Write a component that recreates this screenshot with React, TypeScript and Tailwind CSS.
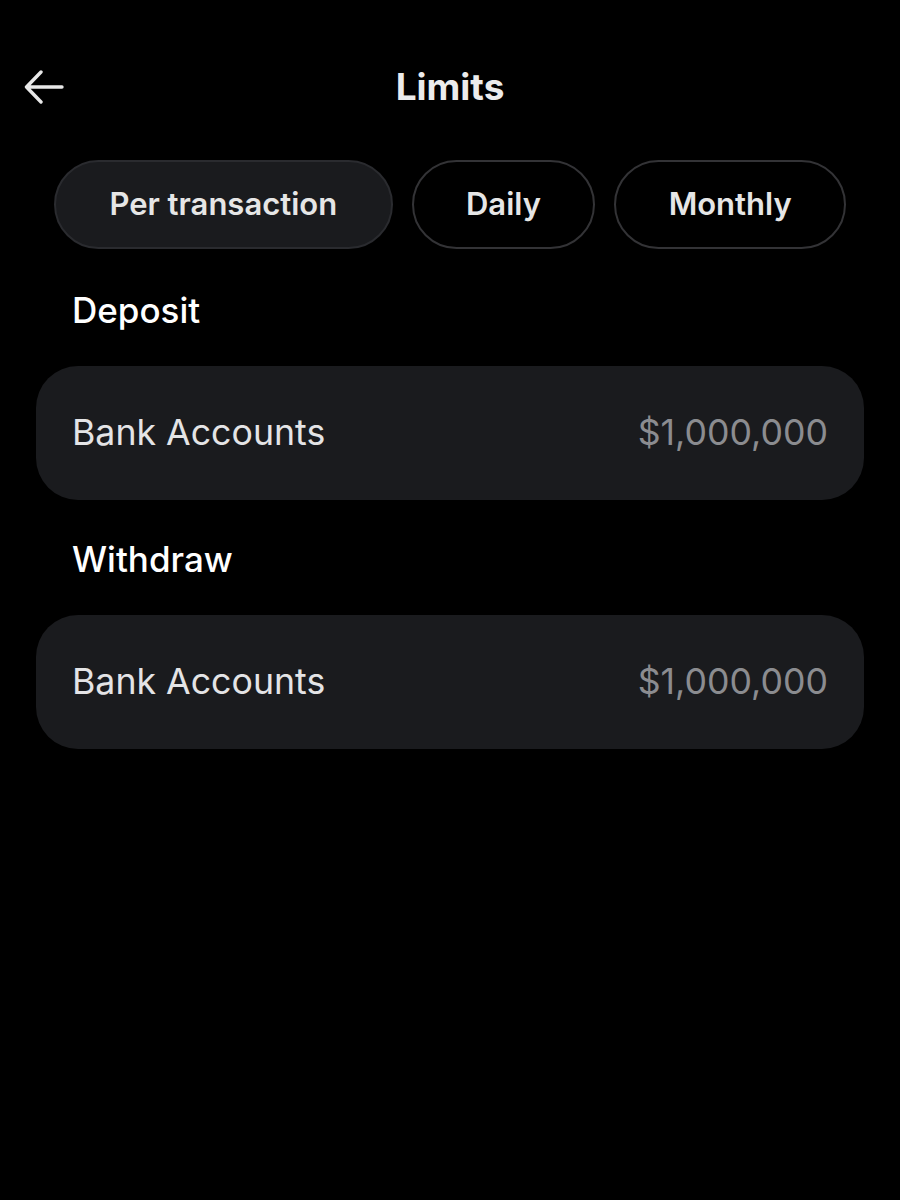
import React from "react";

const tabs = ["Per transaction", "Daily", "Monthly"];

const LimitRow = ({ label, amount }: { label: string; amount: string }) => {
  return (
    <div className="flex h-[134px] items-center justify-between rounded-[42px] bg-[#1a1b1e] pl-9 pr-9">
      <span className="text-[35.7px] text-[#e4e4e6]">{label}</span>
      <span className="text-[35.7px] text-[#8b8c90]">{amount}</span>
    </div>
  );
};

const App = () => {
  return (
    <div
      className="min-h-[1200px] w-[900px] bg-black text-white"
      style={{ fontFamily: "Inter, 'Noto Sans', sans-serif" }}
    >
      <header className="relative flex h-[174px] items-start justify-center pt-[68px]">
        <button className="absolute left-[24px] top-[70px] text-[#e8e8e8]">
          <svg width="40" height="34" viewBox="0 0 40 34" fill="none">
            <path
              d="M38 17H3M17 2L2.5 17L17 32"
              stroke="currentColor"
              strokeWidth="3.4"
              strokeLinecap="round"
              strokeLinejoin="round"
            />
          </svg>
        </button>
        <h1 className="text-[37px] font-bold leading-[38px] text-[#ececec]">Limits</h1>
      </header>

      <div className="-mt-[14px] flex gap-[19px] px-[54px]">
        {tabs.map((t, i) => (
          <button
            key={t}
            className={
              i === 0
                ? "flex h-[89px] w-[339px] items-center justify-center rounded-full border-2 border-[#2a2b2f] bg-[#1a1b1e] text-[31px] font-semibold text-[#e6e6e6]"
                : i === 1
                ? "flex h-[89px] w-[184px] items-center justify-center rounded-full border-2 border-[#333336] bg-black text-[31px] font-semibold text-[#e6e6e6]"
                : "flex h-[89px] w-[232px] items-center justify-center rounded-full border-2 border-[#333336] bg-black text-[31px] font-semibold text-[#e6e6e6]"
            }
          >
            {t}
          </button>
        ))}
      </div>

      <div className="px-9">
        <h2 className="mt-[38px] pl-9 text-[35px] font-medium leading-[46px]">Deposit</h2>
        <div className="mt-[33px]">
          <LimitRow label="Bank Accounts" amount="$1,000,000" />
        </div>

        <h2 className="mt-[36px] pl-9 text-[35px] font-medium leading-[46px]">Withdraw</h2>
        <div className="mt-[33px]">
          <LimitRow label="Bank Accounts" amount="$1,000,000" />
        </div>
      </div>
    </div>
  );
};

export default App;
